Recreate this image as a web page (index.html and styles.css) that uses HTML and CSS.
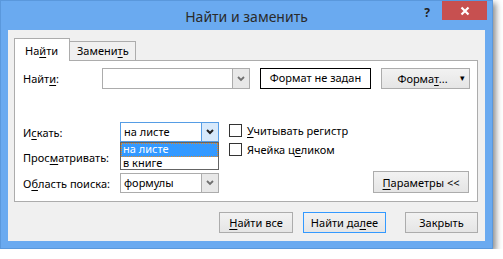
FILE: index.html
```html
<!DOCTYPE html>
<html lang="ru">
<head>
    <meta charset="UTF-8">
    <title>Найти и заменить</title>
    <link rel="stylesheet" href="styles.css">
</head>
<body>
    <div class="window">
        <div class="titlebar">
            <span></span>
            <span class="title">Найти и заменить</span>
            <span class="controls">
                <span class="help">?</span>
                <span class="close">
                    <svg width="10" height="10" viewBox="0 0 10 10"><path d="M1.5 1.5 L8.5 8.5 M8.5 1.5 L1.5 8.5" stroke="#fff" stroke-width="2.2"/></svg>
                </span>
            </span>
        </div>
        <div class="client">
            <div class="tabs">
                <div class="tab active">На<u>й</u>ти</div>
                <div class="tab">Замени<u>т</u>ь</div>
            </div>
            <div class="panel">
                <div class="find-row">
                    <label class="find-label">Найт<u>и</u>:</label>
                    <div class="combo find-combo">
                        <span class="combo-text"></span>
                        <span class="combo-btn">
                            <svg width="8" height="6" viewBox="0 0 8 6"><polyline points="1,1 4,4 7,1" fill="none" stroke="#707070" stroke-width="1.8"/></svg>
                        </span>
                    </div>
                    <div class="format-box">Формат не задан</div>
                    <button class="btn format-btn">Форма<u>т</u>... <span class="arrow">&#9662;</span></button>
                </div>

                <div class="options">
                    <div class="option-grid">
                        <label>И<u>с</u>кать:</label>
                        <div class="combo open">
                            <span class="combo-text">на листе</span>
                            <span class="combo-btn">
                                <svg width="8" height="6" viewBox="0 0 8 6"><polyline points="1,1 4,4 7,1" fill="none" stroke="#222" stroke-width="2"/></svg>
                            </span>
                        </div>
                        <label>Прос<u>м</u>атривать:</label>
                        <div class="combo">
                            <span class="combo-text"></span>
                            <span class="combo-btn"></span>
                        </div>
                        <label>О<u>б</u>ласть поиска:</label>
                        <div class="combo">
                            <span class="combo-text">формулы</span>
                            <span class="combo-btn">
                                <svg width="8" height="6" viewBox="0 0 8 6"><polyline points="1,1 4,4 7,1" fill="none" stroke="#707070" stroke-width="1.8"/></svg>
                            </span>
                        </div>
                    </div>
                    <div class="checks">
                        <label class="check"><span class="box"></span><span><u>У</u>читывать регистр</span></label>
                        <label class="check"><span class="box"></span><span>Ячейка ц<u>е</u>ликом</span></label>
                    </div>
                    <button class="btn params-btn"><u>П</u>араметры &lt;&lt;</button>

                    <div class="dropdown">
                        <div class="item selected">на листе</div>
                        <div class="item">в книге</div>
                    </div>
                </div>
            </div>
            <div class="footer">
                <button class="btn find-all"><u>Н</u>айти все</button>
                <button class="btn find-next default">Найти да<u>л</u>ее</button>
                <button class="btn close-btn">Закрыть</button>
            </div>
        </div>
    </div>
</body>
</html>
```

FILE: styles.css
```css
body{
    margin: 0;
    background: #fff;
    font-family: 'Noto Sans', 'Open Sans', sans-serif;
    font-size: 11px;
    color: #000;
}
u{
    text-decoration: underline;
    text-underline-offset: 2px;
}
.window{
    box-sizing: border-box;
    width: 493px;
    height: 249px;
    background: #6aaaf0;
    border: 1px solid #5a98dc;
    padding: 0 7px 7px 7px;
    box-shadow: 3px 3px 6px rgba(0, 0, 0, 0.45);
    display: flex;
    flex-direction: column;
}
.titlebar{
    height: 29px;
    display: grid;
    grid-template-columns: 1fr auto 1fr;
    align-items: start;
}
.title{
    font-size: 14px;
    color: #2b2b2b;
    margin-top: 6px;
}
.controls{
    display: flex;
    justify-content: flex-end;
    align-items: flex-start;
    margin-right: -2px;
}
.help{
    font-weight: bold;
    font-size: 12px;
    color: #222;
    margin: 3px 12px 0 0;
}
.close{
    width: 45px;
    height: 19px;
    background: #c75050;
    display: flex;
    align-items: center;
    justify-content: center;
}
.client{
    flex: 1;
    background: #f0f0f0;
    padding: 8px 7px 0 6px;
}
.tabs{
    display: flex;
    align-items: flex-end;
    height: 22px;
    position: relative;
    z-index: 2;
}
.tab{
    box-sizing: border-box;
    border: 1px solid #acacac;
    border-bottom: none;
    background: #f0f0f0;
    height: 19px;
    width: 67px;
    margin-left: -1px;
    padding: 1px 0 0 7px;
    line-height: 16px;
}
.tab.active{
    background: #fff;
    height: 23px;
    width: 56px;
    margin-left: 0;
    margin-bottom: -1px;
    padding: 4px 0 0 10px;
    position: relative;
    z-index: 3;
}
.panel{
    box-sizing: border-box;
    height: 142px;
    background: #fff;
    border: 1px solid #acacac;
    padding: 7px 7px 0 8px;
}
.find-row{
    display: flex;
    align-items: center;
    height: 21px;
}
.find-label{
    width: 79px;
}
.combo{
    box-sizing: border-box;
    display: flex;
    border: 1px solid #acacac;
    background: #fff;
    height: 20px;
    width: 99px;
}
.combo-text{
    flex: 1;
    padding-left: 3px;
    line-height: 17px;
}
.combo-btn{
    width: 16px;
    background: #e8e8e8;
    border-left: 1px solid #acacac;
    display: flex;
    align-items: center;
    justify-content: center;
}
.find-combo{
    width: 148px;
    height: 21px;
}
.format-box{
    box-sizing: border-box;
    width: 111px;
    height: 21px;
    margin-left: 10px;
    border: 1px solid #000;
    text-align: center;
    line-height: 18px;
}
.btn{
    box-sizing: border-box;
    font-family: inherit;
    font-size: 11px;
    color: #000;
    background: linear-gradient(#f2f2f2, #e5e5e5);
    border: 1px solid #acacac;
    padding: 0;
    height: 21px;
}
.format-btn{
    width: 89px;
    margin-left: 10px;
    position: relative;
    padding-right: 6px;
}
.arrow{
    position: absolute;
    right: 4px;
    top: 2px;
    font-size: 9px;
}
.options{
    position: relative;
    display: flex;
    margin-top: 33px;
    height: 71px;
}
.option-grid{
    display: grid;
    grid-template-columns: 97px 99px;
    grid-auto-rows: 20px;
    row-gap: 5.5px;
    align-items: center;
}
.combo.open{
    border-color: #569de5;
}
.combo.open .combo-btn{
    background: #d7e9fb;
    border-left-color: #569de5;
}
.checks{
    margin-left: 10px;
    display: flex;
    flex-direction: column;
    gap: 3px;
}
.check{
    display: flex;
    align-items: center;
    gap: 5px;
    height: 16px;
}
.box{
    box-sizing: border-box;
    width: 13px;
    height: 13px;
    border: 1px solid #333;
    background: #fff;
}
.params-btn{
    align-self: flex-end;
    margin-left: auto;
    margin-right: 1px;
    width: 96px;
    height: 22px;
}
.dropdown{
    position: absolute;
    left: 97px;
    top: 20px;
    box-sizing: border-box;
    width: 99px;
    height: 28px;
    border: 1px solid #646464;
    background: #fff;
    z-index: 5;
}
.item{
    height: 13px;
    line-height: 12px;
    padding-left: 2px;
}
.item.selected{
    box-sizing: border-box;
    background: #3399ff;
    color: #fff;
    outline: 1px dotted #e08a2a;
    outline-offset: -1px;
    height: 14px;
}
.footer{
    display: flex;
    justify-content: flex-end;
    margin-top: 10px;
}
.find-all{
    width: 74px;
}
.find-next{
    width: 83px;
    margin-left: 10px;
}
.default{
    border-color: #3399ff;
}
.close-btn{
    width: 73px;
    margin-left: 19px;
}
```
